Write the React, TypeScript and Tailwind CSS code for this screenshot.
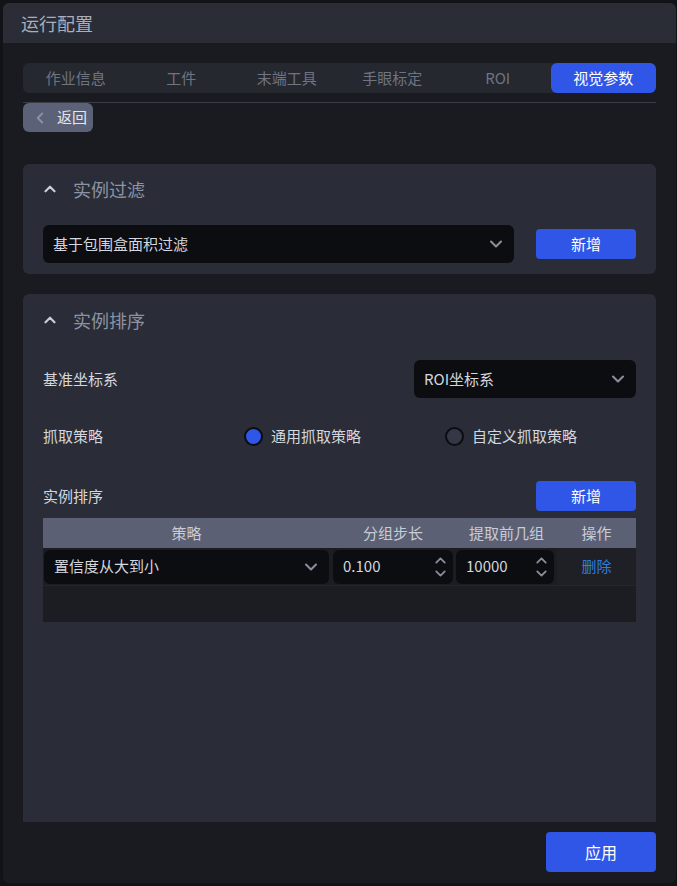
import { ChevronUp, ChevronDown, ChevronLeft } from "lucide-react";

const tabs = ["作业信息", "工件", "末端工具", "手眼标定", "ROI", "视觉参数"];

function Select({ value, className }: { value: string; className: string }) {
  return (
    <div className={`flex items-center justify-between rounded-md bg-[#0c0d11] pl-2.5 pr-2 text-[15px] text-[#d4d7de] ${className}`}>
      <span>{value}</span>
      <ChevronDown size={20} strokeWidth={2.5} className="text-[#8a8f9c]" />
    </div>
  );
}

function Stepper({ value }: { value: string }) {
  return (
    <div className="flex h-[34px] flex-1 items-center justify-between rounded-md bg-[#0c0d11] pl-2.5 pr-1 text-[15px] text-[#d4d7de]">
      <span>{value}</span>
      <div className="flex flex-col text-[#8a8f9c]">
        <ChevronUp size={17} strokeWidth={2.5} className="-mb-1" />
        <ChevronDown size={17} strokeWidth={2.5} />
      </div>
    </div>
  );
}

function Radio({ checked, label }: { checked: boolean; label: string }) {
  return (
    <div className="flex items-center gap-2">
      <span
        className={`h-[19px] w-[19px] rounded-full border-2 border-[#0c0d11] ${checked ? "bg-[#3056e8]" : "bg-[#343846]"}`}
      />
      <span className="text-[15px] text-[#d4d7de]">{label}</span>
    </div>
  );
}

export default function App() {
  return (
    <div
      className="h-[886px] w-[677px] bg-[#121318] pl-[3px] pt-[3px]"
      style={{ fontFamily: '"Noto Sans CJK SC", "Noto Sans", sans-serif' }}
    >
      <div className="flex h-[880px] w-[673px] flex-col overflow-hidden rounded-md bg-[#1a1b20]">
        {/* Header */}
        <div className="flex h-[40px] shrink-0 items-center bg-[#2a2d36] px-[18px] text-[18px] text-[#a9aebb]">
          运行配置
        </div>

        <div className="flex flex-1 flex-col px-5">
          {/* Tabs */}
          <div className="mt-5 flex h-[30px] rounded-md bg-[#262830]">
            {tabs.map((t, i) => (
              <div
                key={t}
                className={`flex flex-1 items-center justify-center rounded-md text-[15px] ${
                  i === tabs.length - 1 ? "bg-[#3056e8] text-white" : "text-[#6f7482]"
                }`}
              >
                {t}
              </div>
            ))}
          </div>
          <div className="mt-[9px] h-px bg-[#3a3d48]" />
          <div className="flex h-[29px] w-[70px] items-center gap-2 rounded-md bg-[#5b6278] pl-2 text-[15px] text-[#e4e6ec]">
            <ChevronLeft size={18} strokeWidth={2.5} className="text-[#8b91a3]" />
            <span>返回</span>
          </div>

          {/* 实例过滤 */}
          <div className="mt-8 rounded-md bg-[#2a2d37] px-5 pb-[11px]">
            <div className="flex h-[50px] items-center gap-[14px] text-[18px] text-[#8d93a3]">
              <ChevronUp size={18} strokeWidth={3} className="-ml-0.5 text-[#c8ccd5]" />
              <span>实例过滤</span>
            </div>
            <div className="mt-[11px] flex items-center justify-between">
              <Select value="基于包围盒面积过滤" className="h-[38px] w-[471px]" />
              <button className="h-[30px] w-[100px] rounded bg-[#3056e8] text-[15px] text-white">新增</button>
            </div>
          </div>

          {/* 实例排序 */}
          <div className="mt-5 flex-1 rounded-t-md bg-[#2a2d37] px-5">
            <div className="flex h-[52px] items-center gap-[14px] text-[18px] text-[#8d93a3]">
              <ChevronUp size={18} strokeWidth={3} className="-ml-0.5 text-[#c8ccd5]" />
              <span>实例排序</span>
            </div>
            <div className="mt-[14px] flex items-center justify-between text-[15px] text-[#d4d7de]">
              <span>基准坐标系</span>
              <Select value="ROI坐标系" className="h-[38px] w-[222px]" />
            </div>
            <div className="mt-[28px] flex h-[20px] items-center text-[15px] text-[#d4d7de]">
              <span className="w-[201px]">抓取策略</span>
              <div className="w-[201px]">
                <Radio checked label="通用抓取策略" />
              </div>
              <Radio checked={false} label="自定义抓取策略" />
            </div>
            <div className="mt-[35px] flex items-center justify-between text-[15px] text-[#d4d7de]">
              <span>实例排序</span>
              <button className="h-[30px] w-[100px] rounded bg-[#3056e8] text-[15px] text-white">新增</button>
            </div>

            {/* Table */}
            <div className="mt-[7px] bg-[#1c1d22]">
              <div className="flex h-[30px] items-center bg-[#5b6075] text-[15px] text-[#c9ccd6]">
                <div className="w-[287px] text-center">策略</div>
                <div className="w-[126px] text-center">分组步长</div>
                <div className="w-[101px] text-center">提取前几组</div>
                <div className="flex-1 text-center">操作</div>
              </div>
              <div className="flex h-[37px] items-center">
                <div className="w-[287px] pl-px">
                  <Select value="置信度从大到小" className="h-[34px] w-[285px]" />
                </div>
                <div className="flex w-[126px] px-[3px]">
                  <Stepper value="0.100" />
                </div>
                <div className="flex w-[101px] pr-[3px]">
                  <Stepper value="10000" />
                </div>
                <div className="flex h-full flex-1 items-center justify-center bg-[#1f2025] text-[15px] text-[#2f7de0]">删除</div>
              </div>
              <div className="h-[37px] border-t border-[#25262c]" />
            </div>
          </div>
        </div>

        {/* Footer */}
        <div className="flex h-[61px] shrink-0 items-start justify-end px-5 pt-[10px]">
          <button className="h-[40px] w-[110px] rounded bg-[#3056e8] text-[16px] text-white">应用</button>
        </div>
      </div>
    </div>
  );
}
